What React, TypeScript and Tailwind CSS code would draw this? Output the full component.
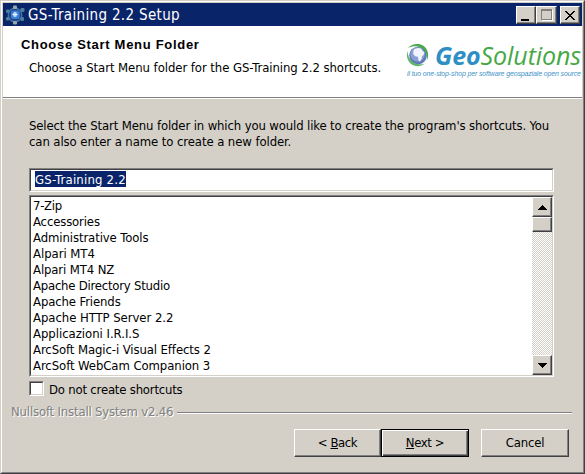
import type { ReactNode } from "react";

const folders: { name: string; tracking: string }[] = [
  { name: "7-Zip", tracking: "tracking-[-0.3px]" },
  { name: "Accessories", tracking: "tracking-[-0.15px]" },
  { name: "Administrative Tools", tracking: "tracking-[-0.1px]" },
  { name: "Alpari MT4", tracking: "tracking-[-0.05px]" },
  { name: "Alpari MT4 NZ", tracking: "tracking-[-0.12px]" },
  { name: "Apache Directory Studio", tracking: "tracking-[-0.23px]" },
  { name: "Apache Friends", tracking: "tracking-[-0.12px]" },
  { name: "Apache HTTP Server 2.2", tracking: "tracking-[-0.06px]" },
  { name: "Applicazioni I.R.I.S", tracking: "tracking-[-0.03px]" },
  { name: "ArcSoft Magic-i Visual Effects 2", tracking: "tracking-[-0.1px]" },
  { name: "ArcSoft WebCam Companion 3", tracking: "tracking-[-0.08px]" },
];

const raised =
  "border border-t-white border-l-white border-r-[#404040] border-b-[#404040] bg-[#d4d0c8] shadow-[inset_-1px_-1px_0_#808080]";
const sunken =
  "border border-t-[#808080] border-l-[#808080] border-r-white border-b-white";
const sunkenInner =
  "border border-t-[#404040] border-l-[#404040] border-r-[#d4d0c8] border-b-[#d4d0c8] bg-white";

function AppIcon() {
  return (
    <svg className="ml-[2px] h-5 w-5 shrink-0" viewBox="0 0 20 20">
      <circle cx="10" cy="10" r="6.8" fill="#1d4585" stroke="#41719f" strokeWidth="1.4" />
      <rect x="6" y="5.500" width="8.500" height="8.500" rx="2.500" fill="#3d7fdc" />
      <circle cx="10" cy="9.500" r="2.300" fill="#9cc6f6" />
      <path d="M10 7v5M7.5 9.5h5" stroke="#e2f1ff" strokeWidth="1" />
      <g fill="#93a9ac">
        <rect x="8" y="0.5" width="4" height="3.5" rx="1.2" />
        <rect x="8" y="16" width="4" height="3.5" rx="1.2" />
      </g>
      <g fill="#4f7f9e">
        <rect x="1" y="4.500" width="3.500" height="3.500" rx="1.2" />
        <rect x="1" y="12" width="3.500" height="3.500" rx="1.2" />
        <rect x="15.5" y="3" width="4" height="4" rx="1.2" />
        <rect x="15.5" y="12" width="3.500" height="4" rx="1.2" />
      </g>
    </svg>
  );
}

function Globe() {
  return (
    <svg className="mt-px h-[24px] w-[24px] shrink-0" viewBox="0 0 24 24">
      <circle cx="12" cy="12.500" r="8.8" fill="#5f7abb" />
      <circle cx="11.500" cy="11.500" r="7.200" fill="#8ba0d2" />
      <path
        d="M7.500 7c2-2.200 5.500-2.600 7.500-1.500l1.500 2.200 2 1.800-.8 2.300-1.700 1.500-.5 3-1.700 2.500-1.500-1.800-.3-3.200-2.800-.5-2-2.300z"
        fill="#f1f4fa"
      />
      <path d="M2 5C5.500.8 12-.3 16.500 2.300c5 2.700 7.300 9 4.300 15.500.6-6-1.100-10.500-5.300-12.800C11.500 2.500 6.500 2.500 2 5z" fill="#4aa84c" />
      <path d="M1.600 8c-1.600 4.500-.3 10 3.600 13 4 3 9.500 2.800 13.300-.3-4.500 1-9 .7-12-1.900C3.200 16.200 1.700 12.500 1.600 8z" fill="#5fb56a" />
    </svg>
  );
}

function PushButton({ children, className }: { children: ReactNode; className: string }) {
  return (
    <button className={`flex h-7 shrink-0 items-center justify-center text-[13px] leading-4 ${className}`}>
      {children}
    </button>
  );
}

export default function App() {
  return (
    <div className="h-[474px] w-[585px] overflow-hidden border border-t-[#d4d0c8] border-r-[#404040] border-b-[#404040] border-l-[#d4d0c8] font-['DejaVu_Sans_Condensed','DejaVu_Sans',sans-serif] text-[13px] leading-4 whitespace-nowrap text-black">
      <div className="flex h-full flex-col border border-t-white border-r-[#808080] border-b-[#808080] border-l-white bg-[#d4d0c8] pt-px pr-px pl-px">
        <header className="flex h-[23px] shrink-0 items-center bg-[#0a246a] pr-[2px] text-white">
          <AppIcon />
          <h1 className="ml-[3px] text-[15px] leading-5 tracking-[0.34px]">GS-Training 2.2 Setup</h1>
          <div className="ml-auto flex">
            <button className={`flex h-[18px] w-5 items-end pb-[2px] pl-1 ${raised}`}>
              <span className="h-[2px] w-2 bg-black" />
            </button>
            <button className={`flex h-[18px] w-[21px] items-center justify-center ${raised}`}>
              <span className="h-[11px] w-[11px] border border-t-2 border-[#808080] shadow-[1px_1px_0_white]" />
            </button>
            <button className={`ml-[3px] flex h-[18px] w-5 items-center justify-center ${raised}`}>
              <svg className="mt-px h-[9px] w-[10px]" viewBox="0 0 10 9" shapeRendering="crispEdges">
                <path d="M0 0h2v1h1v1h1v1h2v-1h1v-1h1v-1h2v1h-1v1h-1v1h-1v1h-1v1h1v1h1v1h1v1h1v1h-2v-1h-1v-1h-1v-1h-2v1h-1v1h-1v1h-2v-1h1v-1h1v-1h1v-1h1v-1h-1v-1h-1v-1h-1v-1h-1z" />
              </svg>
            </button>
          </div>
        </header>

        <section className="flex h-[71px] shrink-0 bg-white">
          <div className="pt-[11px] pl-[18px]">
            <h2 className="font-['Liberation_Sans',Arial,sans-serif] text-[13px] leading-4 font-bold tracking-[0.7px]">
              Choose Start Menu Folder
            </h2>
            <p className="mt-[6px] ml-2 pt-px tracking-[-0.065px]">
              Choose a Start Menu folder for the GS-Training 2.2 shortcuts.
            </p>
          </div>
          <div className="mt-[16px] ml-auto w-[176px] shrink-0">
            <div className="flex h-[27px] items-start font-['Open_Sans',sans-serif] text-[25px] leading-[26px] tracking-[-0.08px] italic">
              <Globe />
              <span className="ml-[5px] font-bold text-[#2f8fc5]">Geo</span>
              <span className="text-[#45a844]">Solutions</span>
            </div>
            <p className="ml-px font-['Liberation_Sans',sans-serif] text-[7px] leading-[9px] tracking-[-0.14px] text-[#3f93c8] italic">
              il tuo one-stop-shop per software geospaziale open source
            </p>
          </div>
        </section>
        <div className="h-[2px] shrink-0 border-t border-t-[#808080] bg-white" />

        <main className="shrink-0 pt-[19px] pr-7 pl-[26px]">
          <p className="h-4 tracking-[-0.132px]">
            Select the Start Menu folder in which you would like to create the program's shortcuts. You
          </p>
          <p className="h-4 tracking-[-0.09px]">can also enter a name to create a new folder.</p>

          <div className={`mt-[18px] h-6 w-[525px] ${sunken}`}>
            <div className={`flex h-full items-start pt-px pl-1 ${sunkenInner}`}>
              <span className="h-4 bg-[#0a246a] pt-px tracking-[0.2px] text-white">GS-Training 2.2</span>
            </div>
          </div>

          <div className={`mt-[3px] h-[182px] w-[525px] ${sunken}`}>
            <div className={`flex h-full justify-between ${sunkenInner}`}>
              <ul className="pt-px pl-[2px]">
                {folders.map((f) => (
                  <li key={f.name} className={`h-4 ${f.tracking}`}>
                    {f.name}
                  </li>
                ))}
              </ul>
              <div className="flex w-5 flex-col bg-[repeating-conic-gradient(#ffffff_0_25%,#d4d0c8_0_50%)] bg-size-[2px_2px]">
                <button className={`flex h-5 items-center justify-center ${raised}`}>
                  <svg className="h-[5px] w-[9px]" viewBox="0 0 9 5" shapeRendering="crispEdges">
                    <path d="M4 0h1v1h1v1h1v1h1v1h1v1H0V4h1V3h1V2h1V1h1z" />
                  </svg>
                </button>
                <div className={`h-[15px] ${raised}`} />
                <button className={`mt-auto flex h-5 items-center justify-center ${raised}`}>
                  <svg className="h-[5px] w-[9px]" viewBox="0 0 9 5" shapeRendering="crispEdges">
                    <path d="M0 0h9v1H8v1H7v1H6v1H5v1H4V4H3V3H2V2H1V1H0z" />
                  </svg>
                </button>
              </div>
            </div>
          </div>

          <label className="mt-1 flex h-4 items-start">
            <span className={`h-[15px] w-[15px] ${sunken}`}>
              <span className={`block h-full ${sunkenInner}`} />
            </span>
            <span className="mt-px ml-[5px] tracking-[-0.2px]">Do not create shortcuts</span>
          </label>
        </main>

        <div className="mt-[7px] flex h-4 shrink-0 items-center pr-[10px] pl-2">
          <span className="w-[166px] tracking-[-0.17px] text-[#808080] [text-shadow:1px_1px_0_white]">
            Nullsoft Install System v2.46
          </span>
          <span className="mt-px h-[2px] flex-1 border-t border-t-[#808080] bg-white" />
        </div>

        <footer className="mt-[9px] flex shrink-0 justify-end pr-[13px]">
          <PushButton className={`w-[87px] tracking-[-0.4px] ${raised}`}>
            &lt;&nbsp;<u>B</u>ack
          </PushButton>
          <PushButton className="w-[88px] border border-black bg-[#d4d0c8] tracking-[-0.4px] shadow-[inset_1px_1px_0_white,inset_-1px_-1px_0_#404040,inset_-2px_-2px_0_#808080]">
            <u>N</u>ext&nbsp;&gt;
          </PushButton>
          <PushButton className={`ml-3 w-[88px] tracking-[-0.2px] ${raised}`}>Cancel</PushButton>
        </footer>
      </div>
    </div>
  );
}
